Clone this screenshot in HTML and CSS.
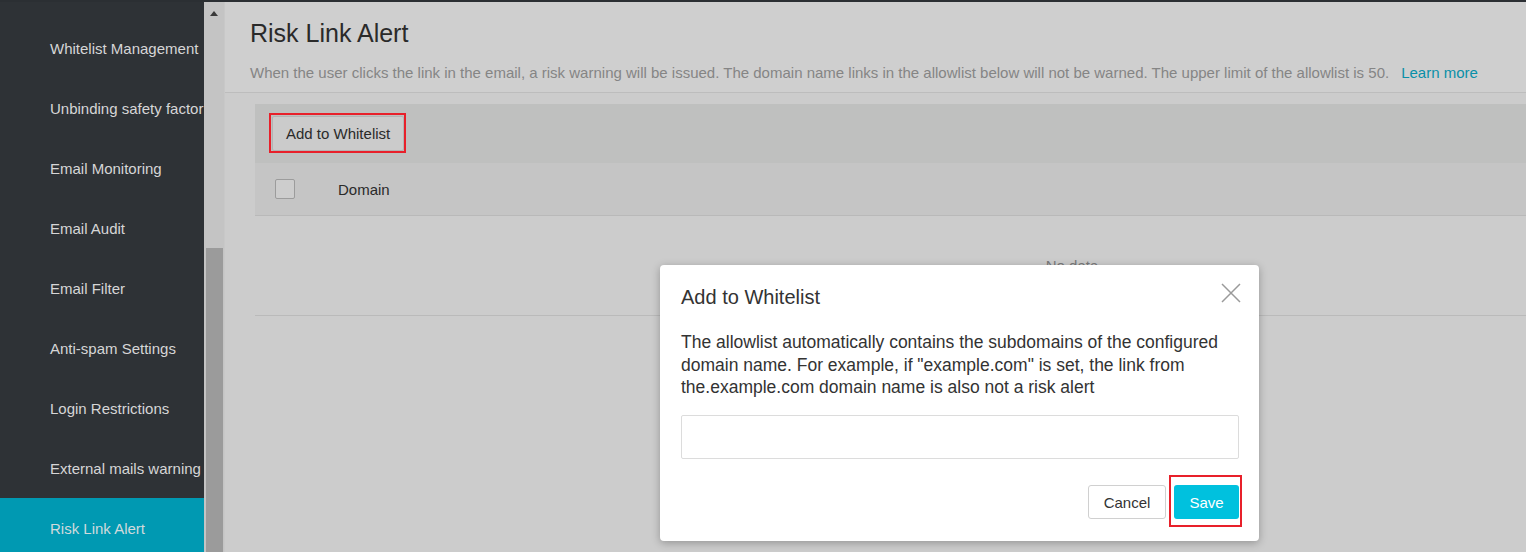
FILE: index.html
```html
<!DOCTYPE html>
<html lang="en">
<head>
<meta charset="utf-8">
<title>Risk Link Alert</title>
<link rel="stylesheet" href="styles.css">
</head>
<body>
<div class="app">
  <div class="topbar"></div>
  <div class="layout">
    <nav class="sidebar">
      <a class="nav-item">Whitelist Management</a>
      <a class="nav-item">Unbinding safety factor</a>
      <a class="nav-item">Email Monitoring</a>
      <a class="nav-item">Email Audit</a>
      <a class="nav-item">Email Filter</a>
      <a class="nav-item">Anti-spam Settings</a>
      <a class="nav-item">Login Restrictions</a>
      <a class="nav-item">External mails warning</a>
      <a class="nav-item active">Risk Link Alert</a>
    </nav>
    <div class="scrollbar">
      <div class="scroll-arrow"></div>
      <div class="scroll-space"></div>
      <div class="scroll-thumb"></div>
    </div>
    <main class="main">
      <header class="page-header">
        <h1 class="page-title">Risk Link Alert</h1>
        <p class="page-desc">When the user clicks the link in the email, a risk warning will be issued. The domain name links in the allowlist below will not be warned. The upper limit of the allowlist is 50.<a class="learn-more">Learn more</a></p>
      </header>
      <section class="content">
        <div class="table-wrap">
          <div class="toolbar">
            <span class="add-wrap"><button class="btn-add">Add to Whitelist</button></span>
          </div>
          <div class="thead">
            <span class="checkbox"></span>
            <span class="th-domain">Domain</span>
          </div>
          <div class="tbody-empty">No data</div>
        </div>
      </section>
    </main>
  </div>

  <div class="modal">
    <div class="modal-head">
      <h2 class="modal-title">Add to Whitelist</h2>
      <svg class="modal-close" width="20" height="20" viewBox="0 0 20 20"><path d="M1 1 L19 19 M19 1 L1 19" stroke="#9a9a9a" stroke-width="1.5" fill="none"/></svg>
    </div>
    <p class="modal-text">The allowlist automatically contains the subdomains of the configured domain name. For example, if "example.com" is set, the link from the.example.com domain name is also not a risk alert</p>
    <input class="modal-input" type="text">
    <div class="modal-foot">
      <button class="btn-cancel">Cancel</button>
      <span class="save-wrap"><button class="btn-save">Save</button></span>
    </div>
  </div>
</div>
</body>
</html>
```

FILE: styles.css
```css
* { box-sizing: border-box; }
html, body { margin: 0; padding: 0; }
body {
  width: 1526px;
  height: 552px;
  overflow: hidden;
  font-family: "Liberation Sans", Arial, sans-serif;
  background: #cccccc;
}
.app { position: relative; width: 1526px; height: 552px; }
.topbar { height: 2px; background: #2b2f33; }
.layout { display: flex; height: 550px; }

.sidebar {
  width: 204px;
  flex: none;
  background: #2e3236;
  padding-top: 16px;
  display: flex;
  flex-direction: column;
  overflow: hidden;
}
.nav-item {
  flex: none;
  height: 60px;
  display: flex;
  align-items: center;
  padding-left: 50px;
  color: #d6d6d6;
  font-size: 15px;
  white-space: nowrap;
  overflow: hidden;
}
.nav-item.active { background: #0099b2; color: #d0dadc; }

.scrollbar {
  width: 21px;
  flex: none;
  background: #c4c4c4;
  display: flex;
  flex-direction: column;
  align-items: center;
  border-right: 1px solid #c8c8c8;
}
.scroll-arrow {
  margin-top: 9px;
  width: 0; height: 0;
  border-left: 4.5px solid transparent;
  border-right: 4.5px solid transparent;
  border-bottom: 5px solid #3a3a3a;
}
.scroll-space { height: 232px; }
.scroll-thumb { width: 17px; flex: 1; background: #9b9b9b; margin-left: 1px; }

.main { flex: 1; min-width: 0; overflow: hidden; }
.page-header {
  height: 91px;
  padding: 17px 0 0 25px;
  border-bottom: 1px solid #bdbdbd;
  background: #cfcfcf;
}
.page-title {
  margin: 0;
  font-size: 25px;
  font-weight: normal;
  line-height: 28px;
  color: #2a2a2a;
}
.page-desc {
  margin: 17px 0 0;
  font-size: 15px;
  line-height: 17px;
  color: #858585;
  white-space: nowrap;
}
.learn-more { color: #0a8fa8; margin-left: 12px; }

.content { padding: 11px 0 0 30px; }
.table-wrap { width: 1634px; }
.toolbar {
  height: 59px;
  background: #bfc0bf;
  padding: 12px 0 0 17px;
}
.add-wrap { position: relative; display: inline-block; }
.add-wrap::after {
  content: "";
  position: absolute;
  left: -3px; top: -3px; right: -2px; bottom: -2px;
  border: 2px solid #e8202a;
}
.btn-add {
  display: block;
  height: 35px;
  padding: 0 13px;
  font: 15px "Liberation Sans", Arial, sans-serif;
  color: #2a2a2a;
  background: #cbcbcb;
  border: 1px solid #b3b3b3;
  border-radius: 2px;
}
.thead {
  height: 53px;
  background: #c5c5c5;
  border-bottom: 1px solid #b9b9b9;
  display: flex;
  align-items: center;
  padding-left: 20px;
}
.checkbox {
  width: 20px; height: 20px;
  border: 1px solid #9c9c9c;
  border-radius: 2px;
  background: #cdcdcd;
}
.th-domain { margin-left: 43px; font-size: 15px; color: #2a2a2a; }
.tbody-empty {
  height: 100px;
  border-bottom: 1px solid #bababa;
  text-align: center;
  padding-top: 41px;
  font-size: 15px;
  color: #7a7a7a;
}

.modal {
  position: absolute;
  left: 660px;
  top: 265px;
  width: 599px;
  height: 276px;
  background: #ffffff;
  border-radius: 4px;
  box-shadow: 0 2px 8px rgba(0,0,0,0.28);
  padding: 20px 20px 22px 21px;
  display: flex;
  flex-direction: column;
}
.modal-head { display: flex; justify-content: space-between; align-items: center; height: 24px; }
.modal-title { margin: 0; font-size: 20px; font-weight: normal; color: #333; line-height: 24px; }
.modal-close { margin-right: -2px; margin-top: -8px; }
.modal-text {
  margin: 22px 0 0;
  font-size: 17.5px;
  line-height: 22.5px;
  color: #333;
}
.modal-input {
  margin-top: 16px;
  height: 45px;
  width: 558px;
  border: 1px solid #dcdcdc;
  border-radius: 2px;
  background: #fff;
}
.modal-foot {
  margin-top: 26px;
  display: flex;
  justify-content: flex-end;
  gap: 8px;
}
.btn-cancel, .btn-save {
  height: 34px;
  font: 15px "Liberation Sans", Arial, sans-serif;
  border-radius: 3px;
}
.btn-cancel {
  width: 78px;
  background: #fff;
  color: #333;
  border: 1px solid #d0d0d0;
}
.save-wrap { position: relative; display: block; }
.save-wrap::after {
  content: "";
  position: absolute;
  left: -5px; top: -10px; right: -3px; bottom: -8px;
  border: 2px solid #e8202a;
}
.btn-save {
  display: block;
  width: 65px;
  background: #00c1de;
  color: #fff;
  border: none;
}
```
